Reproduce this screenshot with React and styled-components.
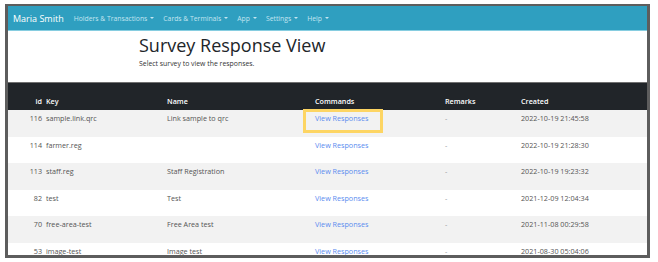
import React from 'react';
import styled, { createGlobalStyle } from 'styled-components';

const GlobalStyle = createGlobalStyle`
    body {
        margin: 0;
        background: #fff;
        font-family: "Open Sans", "Noto Sans", "Liberation Sans", sans-serif;
    }
`;

const Frame = styled.div`
    margin: 4px 0 0 5px;
    width: 645px;
    height: 254px;
    box-sizing: border-box;
    border: 3px solid #5d5d5d;
    border-top-width: 2px;
    overflow: hidden;
    display: flex;
    flex-direction: column;
`;

const Navbar = styled.div`
    height: 24px;
    flex: none;
    background: #2f9fc0;
    border-bottom: 1px solid #86cde0;
    display: flex;
    align-items: center;
    padding-left: 5px;
`;

const Brand = styled.span`
    color: #fff;
    font-size: 9px;
    margin-right: 10px;
`;

const NavItem = styled.span`
    color: #c3e5f0;
    font-size: 6.8px;
    margin-right: 9px;
    display: flex;
    align-items: center;

    &::after {
        content: "";
        margin-left: 3px;
        border-top: 2px solid #c3e5f0;
        border-left: 2px solid transparent;
        border-right: 2px solid transparent;
    }
`;

const Header = styled.div`
    height: 51px;
    flex: none;
    padding-left: 131px;
    box-sizing: border-box;
    padding-top: 2px;
`;

const Title = styled.h1`
    margin: 0;
    font-size: 18px;
    line-height: 24px;
    font-weight: 500;
    color: #212529;
`;

const Subtitle = styled.p`
    margin: 2px 0 0;
    font-size: 6.9px;
    color: #333;
`;

const Table = styled.div`
    border-top: 1px solid #707070;
`;

const Row = styled.div`
    display: grid;
    grid-template-columns: 34px 121px 148px 130px 76px 1fr;
    height: ${p => (p.head ? '27px' : '26.5px')};
    box-sizing: border-box;
    padding-top: ${p => (p.head ? '13px' : '3px')};
    background: ${p => (p.head ? '#212529' : p.striped ? '#f2f2f2' : '#fff')};
    color: ${p => (p.head ? '#fff' : '#555')};
    font-size: 7.2px;
    line-height: 11px;
    font-weight: ${p => (p.head ? 600 : 400)};
`;

const Cell = styled.div`
    position: relative;
    text-align: ${p => (p.right ? 'right' : 'left')};
    padding-left: ${p => (p.right ? '0' : '4px')};
    white-space: nowrap;
    color: ${p => (p.muted ? '#999' : 'inherit')};
`;

const Link = styled.a`
    color: #5a8cef;
    text-decoration: none;
`;

const Highlight = styled.span`
    position: absolute;
    left: -8px;
    top: -4px;
    width: 80px;
    height: 24px;
    box-sizing: border-box;
    border: 3px solid #fdd563;
    pointer-events: none;
`;

const rows = [
    { id: 116, key: 'sample.link.qrc', name: 'Link sample to qrc', created: '2022-10-19 21:45:58' },
    { id: 114, key: 'farmer.reg', name: '', created: '2022-10-19 21:28:30' },
    { id: 113, key: 'staff.reg', name: 'Staff Registration', created: '2022-10-19 19:23:32' },
    { id: 82, key: 'test', name: 'Test', created: '2021-12-09 12:04:34' },
    { id: 70, key: 'free-area-test', name: 'Free Area test', created: '2021-11-08 00:29:58' },
    { id: 53, key: 'image-test', name: 'Image test', created: '2021-08-30 05:04:06' },
];

const menus = ['Holders & Transactions', 'Cards & Terminals', 'App', 'Settings', 'Help'];

export default function App() {
    return (
        <>
            <GlobalStyle />
            <Frame>
                <Navbar>
                    <Brand>Maria Smith</Brand>
                    {menus.map(m => <NavItem key={m}>{m}</NavItem>)}
                </Navbar>
                <Header>
                    <Title>Survey Response View</Title>
                    <Subtitle>Select survey to view the responses.</Subtitle>
                </Header>
                <Table>
                    <Row head>
                        <Cell right>id</Cell>
                        <Cell>Key</Cell>
                        <Cell>Name</Cell>
                        <Cell>Commands</Cell>
                        <Cell>Remarks</Cell>
                        <Cell>Created</Cell>
                    </Row>
                    {rows.map((r, i) => (
                        <Row key={r.id} striped={i % 2 === 0}>
                            <Cell right>{r.id}</Cell>
                            <Cell>{r.key}</Cell>
                            <Cell>{r.name}</Cell>
                            <Cell>
                                <Link href="#">View Responses</Link>
                                {i === 0 && <Highlight />}
                            </Cell>
                            <Cell muted>-</Cell>
                            <Cell>{r.created}</Cell>
                        </Row>
                    ))}
                </Table>
            </Frame>
        </>
    );
}
